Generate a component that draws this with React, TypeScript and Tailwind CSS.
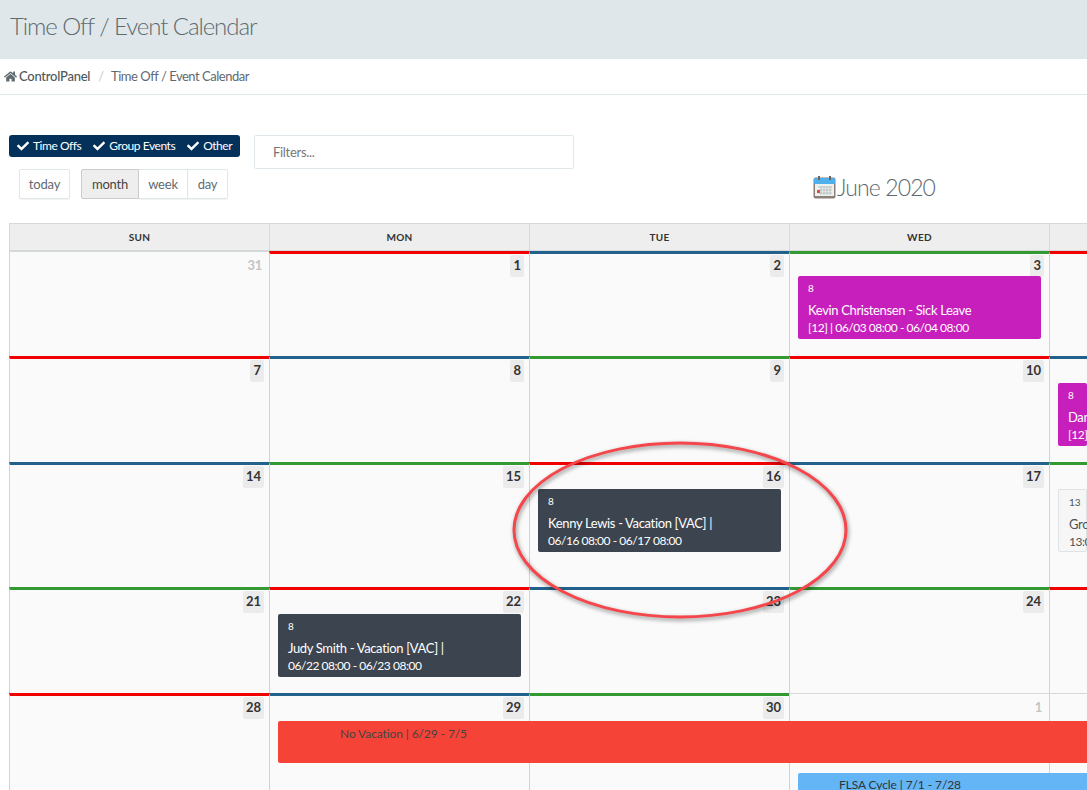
import { FaCheck, FaHome } from "react-icons/fa";

type Ev = {
  col: number;
  time: string;
  title: string;
  detail: string;
  kind: "sick" | "vac" | "group";
};

type Row = {
  h: string;
  evTop: string;
  days: { n?: number; muted?: boolean; top?: string }[];
  events?: Ev[];
  bars?: { col: number; text: string; kind: "red" | "blue" }[];
};

const RED = "border-t-[#f00000]";
const BLUE = "border-t-[#21618c]";
const GREEN = "border-t-[#339933]";

const rows: Row[] = [
  {
    h: "h-[105px]",
    evTop: "mt-[25px]",
    days: [{ n: 31, muted: true }, { n: 1, top: RED }, { n: 2, top: BLUE }, { n: 3, top: GREEN }, { top: RED }],
    events: [
      { col: 4, time: "8", title: "Kevin Christensen - Sick Leave", detail: "[12] | 06/03 08:00 - 06/04 08:00", kind: "sick" },
    ],
  },
  {
    h: "h-[106px]",
    evTop: "mt-[27px]",
    days: [{ n: 7, top: RED }, { n: 8, top: BLUE }, { n: 9, top: GREEN }, { n: 10, top: RED }, { top: BLUE }],
    events: [{ col: 5, time: "8", title: "Dan", detail: "[12]", kind: "sick" }],
  },
  {
    h: "h-[125px]",
    evTop: "mt-[27px]",
    days: [{ n: 14, top: BLUE }, { n: 15, top: GREEN }, { n: 16, top: RED }, { n: 17, top: BLUE }, { top: GREEN }],
    events: [
      { col: 3, time: "8", title: "Kenny Lewis - Vacation [VAC] |", detail: "06/16 08:00 - 06/17 08:00", kind: "vac" },
      { col: 5, time: "13", title: "Gro", detail: "13:00", kind: "group" },
    ],
  },
  {
    h: "h-[106px]",
    evTop: "mt-[27px]",
    days: [{ n: 21, top: GREEN }, { n: 22, top: RED }, { n: 23, top: BLUE }, { n: 24, top: GREEN }, { top: RED }],
    events: [
      { col: 2, time: "8", title: "Judy Smith - Vacation [VAC] |", detail: "06/22 08:00 - 06/23 08:00", kind: "vac" },
    ],
  },
  {
    h: "h-[120px]",
    evTop: "mt-[27px]",
    days: [{ n: 28, top: RED }, { n: 29, top: BLUE }, { n: 30, top: GREEN }, { n: 1, muted: true }, { muted: true }],
    bars: [
      { col: 2, text: "No Vacation | 6/29 - 7/5", kind: "red" },
      { col: 4, text: "FLSA Cycle | 7/1 - 7/28", kind: "blue" },
    ],
  },
];

const colStart: Record<number, string> = {
  1: "col-start-1",
  2: "col-start-2",
  3: "col-start-3",
  4: "col-start-4",
  5: "col-start-5",
};

const evColor = {
  sick: "bg-[#c71fbc] text-white",
  vac: "bg-[#3c454f] text-white",
  group: "bg-[#f6f6f6] text-[#4d5358] border border-[#dfe3e5]",
};

function CalIcon() {
  return (
    <svg width="23" height="23" viewBox="0 0 23 23" className="shrink-0">
      <rect x="0.5" y="1.5" width="22" height="21" rx="2" fill="#8b7f7a" />
      <rect x="1" y="2" width="21" height="6" rx="1" fill="#4fb0ec" />
      <rect x="5" y="0" width="2" height="4" fill="#6b6461" />
      <rect x="16" y="0" width="2" height="4" fill="#6b6461" />
      <rect x="2" y="8" width="19" height="12" fill="#eef1ee" />
      <path d="M5 11h14M5 14h14M5 17h14M8 10v9M11 10v9M14 10v9M17 10v9" stroke="#b9c4c4" strokeWidth="1" />
      <rect x="4" y="14" width="3" height="3" fill="#e8483f" />
    </svg>
  );
}

export default function App() {
  return (
    <div className="relative h-[790px] w-[1087px] overflow-hidden bg-white font-['Lato',sans-serif] text-[#5f6a70]">
      <header className="flex h-[59px] items-start bg-[#dfe7ea] pl-[10px] pt-[11px]">
        <h1 className="text-[24px] font-light leading-[30px] tracking-[-1.08px] text-[#5d6a70]">Time Off / Event Calendar</h1>
      </header>

      <nav className="flex h-[36px] items-center border-b border-[#dfe7ea] pl-[4px] text-[13px]">
        <FaHome className="mr-[2px] text-[13px] text-[#5f6a70]" />
        <span className="font-medium tracking-[-0.25px] text-[#4d575c]">ControlPanel</span>
        <span className="ml-[8px] mr-[7px] text-[#ccc]">/</span>
        <span className="tracking-[-0.48px]">Time Off / Event Calendar</span>
      </nav>

      <div className="flex h-[128px] pl-[9px] pt-[40px]">
        <div className="w-[245px]">
          <div className="flex h-[22px] w-[231px] items-center gap-[12px] whitespace-nowrap rounded-[3px] bg-[#04315a] pl-[8px] text-[12px] tracking-[-0.45px] text-white">
            {["Time Offs", "Group Events", "Other"].map((t) => (
              <span key={t} className="flex items-center gap-[4px]">
                <FaCheck className="text-[12px]" />
                {t}
              </span>
            ))}
          </div>
          <div className="ml-[10px] mt-[12px] flex text-[13px] tracking-[-0.2px]">
            <button className="h-[30px] w-[51px] rounded-[2px] border border-[#dfe7ea] pt-[2px] shadow-[0_1px_1px_rgba(0,0,0,0.05)]">today</button>
            <div className="ml-[11px] flex">
              <button className="h-[30px] w-[58px] rounded-l-[2px] border border-[#ccc] bg-[#eee] pt-[2px] text-[#444]">month</button>
              <button className="h-[30px] w-[49px] border-y border-r border-[#dfe7ea] pt-[2px] shadow-[0_1px_1px_rgba(0,0,0,0.05)]">week</button>
              <button className="h-[30px] w-[40px] rounded-r-[2px] border-y border-r border-[#dfe7ea] pt-[2px] shadow-[0_1px_1px_rgba(0,0,0,0.05)]">day</button>
            </div>
          </div>
        </div>

        <div className="flex h-[34px] w-[320px] items-center rounded-[2px] border border-[#dfe7ea] pl-[18px] pt-[2px] text-[13px] tracking-[-0.3px] text-[#777]">
          Filters...
        </div>

        <div className="ml-[239px] mt-[40px] flex h-[24px] items-center gap-[1px]">
          <CalIcon />
          <span className="text-[23px] font-light tracking-[-0.9px] text-[#5d6a70]">June 2020</span>
        </div>
      </div>

      <div className="ml-[9px]">
        <div className="grid h-[28px] grid-cols-[repeat(4,260px)_38px] border-y border-[#d5d9da] bg-[#eeeeee]">
          {["SUN", "MON", "TUE", "WED", ""].map((d, i) => (
            <div key={i} className="flex items-center justify-center border-l border-[#d5d9da] text-[10px] font-bold tracking-[0.3px] text-[#333]">
              {d}
            </div>
          ))}
        </div>

        {rows.map((row, i) => (
          <div key={i} className={`grid grid-cols-[repeat(4,260px)_38px] overflow-hidden ${row.h}`}>
            {row.days.map((d, j) => (
              <div
                key={j}
                className={`row-start-1 flex justify-end border-l border-l-[#d3d3d3] bg-[#fafafa] pr-[5px] ${colStart[j + 1]} ${
                  d.top ? `border-t-[3px] pt-[1px] ${d.top}` : "border-t border-t-[#d5d9da] pt-[3px]"
                }`}
              >
                {d.n === undefined ? null : d.muted ? (
                  <span className="flex h-[22px] items-center justify-end pr-[2px] text-[13px] font-bold tracking-[-0.3px] text-[#c4c4c4]">{d.n}</span>
                ) : (
                  <span className="flex h-[22px] min-w-[13px] items-center justify-center rounded-[2px] bg-[#ebebeb] px-[3px] text-[13px] font-bold text-[#333]">{d.n}</span>
                )}
              </div>
            ))}

            {row.events?.map((e) => (
              <div
                key={e.col}
                className={`row-start-1 ml-[9px] flex h-[63px] flex-col rounded-[2px] pl-[10px] text-[13px] ${row.evTop} ${colStart[e.col]} ${evColor[e.kind]} ${
                  e.col === 5 ? "mr-0" : "mr-[8px]"
                }`}
              >
                <span className="mt-[5px] h-[15px] text-[10px] leading-[15px]">{e.time}</span>
                <span className="mt-[5px] h-[18px] whitespace-nowrap leading-[18px] tracking-[-0.35px]">{e.title}</span>
                <span className="h-[18px] whitespace-nowrap text-[12px] leading-[18px] tracking-[-0.46px]">{e.detail}</span>
              </div>
            ))}

            {row.bars?.map((b) =>
              b.kind === "red" ? (
                <div
                  key={b.text}
                  className="col-span-4 col-start-2 row-start-1 ml-[9px] mt-[28px] h-[42px] rounded-l-[2px] bg-[#f54337] pl-[62px] pt-[4px] text-[12px] tracking-[-0.1px] text-[#444]"
                >
                  {b.text}
                </div>
              ) : (
                <div
                  key={b.text}
                  className="col-span-2 col-start-4 row-start-1 ml-[9px] mt-[80px] h-[30px] rounded-l-[2px] bg-[#64b5f6] pl-[41px] pt-[3px] text-[12px] tracking-[-0.1px] text-[#333]"
                >
                  {b.text}
                </div>
              ),
            )}
          </div>
        ))}
      </div>

      <svg
        className="pointer-events-none absolute left-[500px] top-[430px] drop-shadow-[1px_2px_2px_rgba(0,0,0,0.45)]"
        width="360"
        height="200"
        viewBox="0 0 360 200"
      >
        <ellipse cx="180" cy="100" rx="166" ry="87" fill="none" stroke="#f5474b" strokeWidth="3" />
      </svg>
    </div>
  );
}
